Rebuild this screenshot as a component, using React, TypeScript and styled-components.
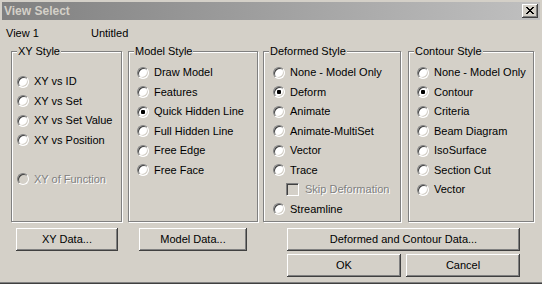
import React from "react";
import styled, { createGlobalStyle } from "styled-components";

const Global = createGlobalStyle`
  html, body { margin: 0; padding: 0; background: #d4d0c8; }
  body {
    font-family: "Liberation Sans", Arial, sans-serif;
    font-size: 11px;
    color: #000;
  }
  * { box-sizing: border-box; }
`;

const Window = styled.div`
  width: 542px;
  height: 284px;
  padding: 2px 2px 0 2px;
  background: #d4d0c8;
  border-bottom: 1px solid #404040;
  box-shadow: inset 0 -1px #808080;
  display: flex;
  flex-direction: column;
`;

const TitleBar = styled.div`
  height: 18px;
  padding: 0 2px 0 2px;
  display: flex;
  align-items: center;
  justify-content: space-between;
  background: linear-gradient(to right, #808080, #c0c0c0);
`;

const TitleText = styled.span`
  font-weight: bold;
  font-size: 12px;
  color: #d4d0c8;
  line-height: 18px;
`;

const raised = `
  background: #d4d0c8;
  border: none;
  box-shadow: inset -1px -1px #404040, inset 1px 1px #ffffff,
    inset -2px -2px #808080, inset 2px 2px #d4d0c8;
`;

const CloseButton = styled.div`
  ${raised}
  width: 16px;
  height: 14px;
  display: flex;
  align-items: center;
  justify-content: center;
  padding: 0 1px 1px 0;
`;

const Header = styled.div`
  display: flex;
  margin-top: 7px;
  padding-left: 4px;
  line-height: 13px;
`;

const HeaderLabel = styled.span<{ $w?: number }>`
  width: ${(p) => (p.$w ? `${p.$w}px` : "auto")};
`;

const GroupRow = styled.div`
  display: flex;
  margin-top: 11px;
  padding-left: 9px;
`;

const Group = styled.div<{ $w: number; $ml: number; $pt: number; $pl: number }>`
  position: relative;
  width: ${(p) => p.$w}px;
  height: 171px;
  margin-left: ${(p) => p.$ml}px;
  padding: ${(p) => p.$pt}px 0 0 ${(p) => p.$pl}px;
  border: 1px solid #808080;
  box-shadow: inset 1px 1px #ffffff, 1px 1px #ffffff;
  display: flex;
  flex-direction: column;
  gap: 6.5px;
`;

const Legend = styled.span`
  position: absolute;
  top: -7px;
  left: 5px;
  padding: 0 1px;
  background: #d4d0c8;
  line-height: 13px;
  white-space: nowrap;
`;

const Row = styled.div<{ $indent?: number }>`
  display: flex;
  align-items: center;
  height: 13px;
  padding-left: ${(p) => p.$indent ?? 0}px;
  white-space: nowrap;
`;

const Spacer = styled.div`
  height: 13px;
`;

const RadioDot = styled.span<{ $checked?: boolean; $disabled?: boolean }>`
  position: relative;
  flex: none;
  width: 12px;
  height: 12px;
  border-radius: 50%;
  border-style: solid;
  border-width: 1px;
  border-color: #808080 #ffffff #ffffff #808080;
  box-shadow: inset 1px 1px #404040, inset -1px -1px #d4d0c8;
  background: ${(p) => (p.$disabled ? "#d4d0c8" : "#ffffff")};
  margin-right: 5px;
  &::after {
    content: "";
    display: ${(p) => (p.$checked ? "block" : "none")};
    position: absolute;
    left: 3px;
    top: 3px;
    width: 4px;
    height: 4px;
    border-radius: 1px;
    background: #000;
  }
`;

const CheckBox = styled.span`
  flex: none;
  width: 13px;
  height: 13px;
  border-style: solid;
  border-width: 1px;
  border-color: #808080 #ffffff #ffffff #808080;
  box-shadow: inset 1px 1px #404040, inset -1px -1px #d4d0c8;
  background: #d4d0c8;
  margin-right: 6px;
`;

const Label = styled.span<{ $disabled?: boolean }>`
  line-height: 13px;
  color: ${(p) => (p.$disabled ? "#808080" : "#000")};
  text-shadow: ${(p) => (p.$disabled ? "1px 1px #ffffff" : "none")};
`;

const ButtonArea = styled.div`
  display: flex;
  margin-top: 6px;
  align-items: flex-start;
`;

const Button = styled.div<{ $w: number; $ml?: number }>`
  ${raised}
  width: ${(p) => p.$w}px;
  height: 23px;
  margin-left: ${(p) => p.$ml ?? 0}px;
  display: flex;
  align-items: center;
  justify-content: center;
  line-height: 13px;
  white-space: nowrap;
`;

const ButtonColumn = styled.div<{ $ml: number }>`
  display: flex;
  flex-direction: column;
  gap: 3px;
  margin-left: ${(p) => p.$ml}px;
`;

const ButtonPair = styled.div`
  display: flex;
  gap: 5px;
`;

type Item =
  | { kind: "radio"; label: string; checked?: boolean; disabled?: boolean }
  | { kind: "check"; label: string; disabled?: boolean }
  | { kind: "spacer" };

const CloseGlyph = () => {
  const px: [number, number][] = [
    [0, 0], [1, 0], [6, 0], [7, 0],
    [1, 1], [2, 1], [5, 1], [6, 1],
    [2, 2], [3, 2], [4, 2], [5, 2],
    [3, 3], [4, 3],
    [2, 4], [3, 4], [4, 4], [5, 4],
    [1, 5], [2, 5], [5, 5], [6, 5],
    [0, 6], [1, 6], [6, 6], [7, 6],
  ];
  return (
    <svg width="8" height="7" viewBox="0 0 8 7" shapeRendering="crispEdges">
      {px.map(([x, y]) => (
        <rect key={`${x}-${y}`} x={x} y={y} width="1" height="1" fill="#000" />
      ))}
    </svg>
  );
};

const GroupBox = ({
  title,
  items,
  w,
  ml,
  pt,
  pl,
}: {
  title: string;
  items: Item[];
  w: number;
  ml: number;
  pt: number;
  pl: number;
}) => (
  <Group $w={w} $ml={ml} $pt={pt} $pl={pl}>
    <Legend>{title}</Legend>
    {items.map((it, i) => {
      if (it.kind === "spacer") return <Spacer key={i} />;
      if (it.kind === "check")
        return (
          <Row key={i} $indent={13}>
            <CheckBox />
            <Label $disabled={it.disabled}>{it.label}</Label>
          </Row>
        );
      return (
        <Row key={i}>
          <RadioDot $checked={it.checked} $disabled={it.disabled} />
          <Label $disabled={it.disabled}>{it.label}</Label>
        </Row>
      );
    })}
  </Group>
);

const r = (label: string, checked = false, disabled = false): Item => ({
  kind: "radio",
  label,
  checked,
  disabled,
});

export default function App() {
  return (
    <>
      <Global />
      <Window>
        <TitleBar>
          <TitleText>View Select</TitleText>
          <CloseButton>
            <CloseGlyph />
          </CloseButton>
        </TitleBar>
        <Header>
          <HeaderLabel $w={85}>View 1</HeaderLabel>
          <HeaderLabel>Untitled</HeaderLabel>
        </Header>
        <GroupRow>
          <GroupBox
            title="XY Style"
            w={111}
            ml={0}
            pt={23}
            pl={5}
            items={[
              r("XY vs ID"),
              r("XY vs Set"),
              r("XY vs Set Value"),
              r("XY vs Position"),
              { kind: "spacer" },
              r("XY of Function", false, true),
            ]}
          />
          <GroupBox
            title="Model Style"
            w={130}
            ml={6}
            pt={14}
            pl={8}
            items={[
              r("Draw Model"),
              r("Features"),
              r("Quick Hidden Line", true),
              r("Full Hidden Line"),
              r("Free Edge"),
              r("Free Face"),
            ]}
          />
          <GroupBox
            title="Deformed Style"
            w={138}
            ml={5}
            pt={14}
            pl={9}
            items={[
              r("None - Model Only"),
              r("Deform", true),
              r("Animate"),
              r("Animate-MultiSet"),
              r("Vector"),
              r("Trace"),
              { kind: "check", label: "Skip Deformation", disabled: true },
              r("Streamline"),
            ]}
          />
          <GroupBox
            title="Contour Style"
            w={126}
            ml={7}
            pt={14}
            pl={8}
            items={[
              r("None - Model Only"),
              r("Contour", true),
              r("Criteria"),
              r("Beam Diagram"),
              r("IsoSurface"),
              r("Section Cut"),
              r("Vector"),
            ]}
          />
        </GroupRow>
        <ButtonArea>
          <Button $w={102} $ml={14}>XY Data...</Button>
          <Button $w={108} $ml={21}>Model Data...</Button>
          <ButtonColumn $ml={40}>
            <Button $w={233}>Deformed and Contour Data...</Button>
            <ButtonPair>
              <Button $w={114}>OK</Button>
              <Button $w={114}>Cancel</Button>
            </ButtonPair>
          </ButtonColumn>
        </ButtonArea>
      </Window>
    </>
  );
}
